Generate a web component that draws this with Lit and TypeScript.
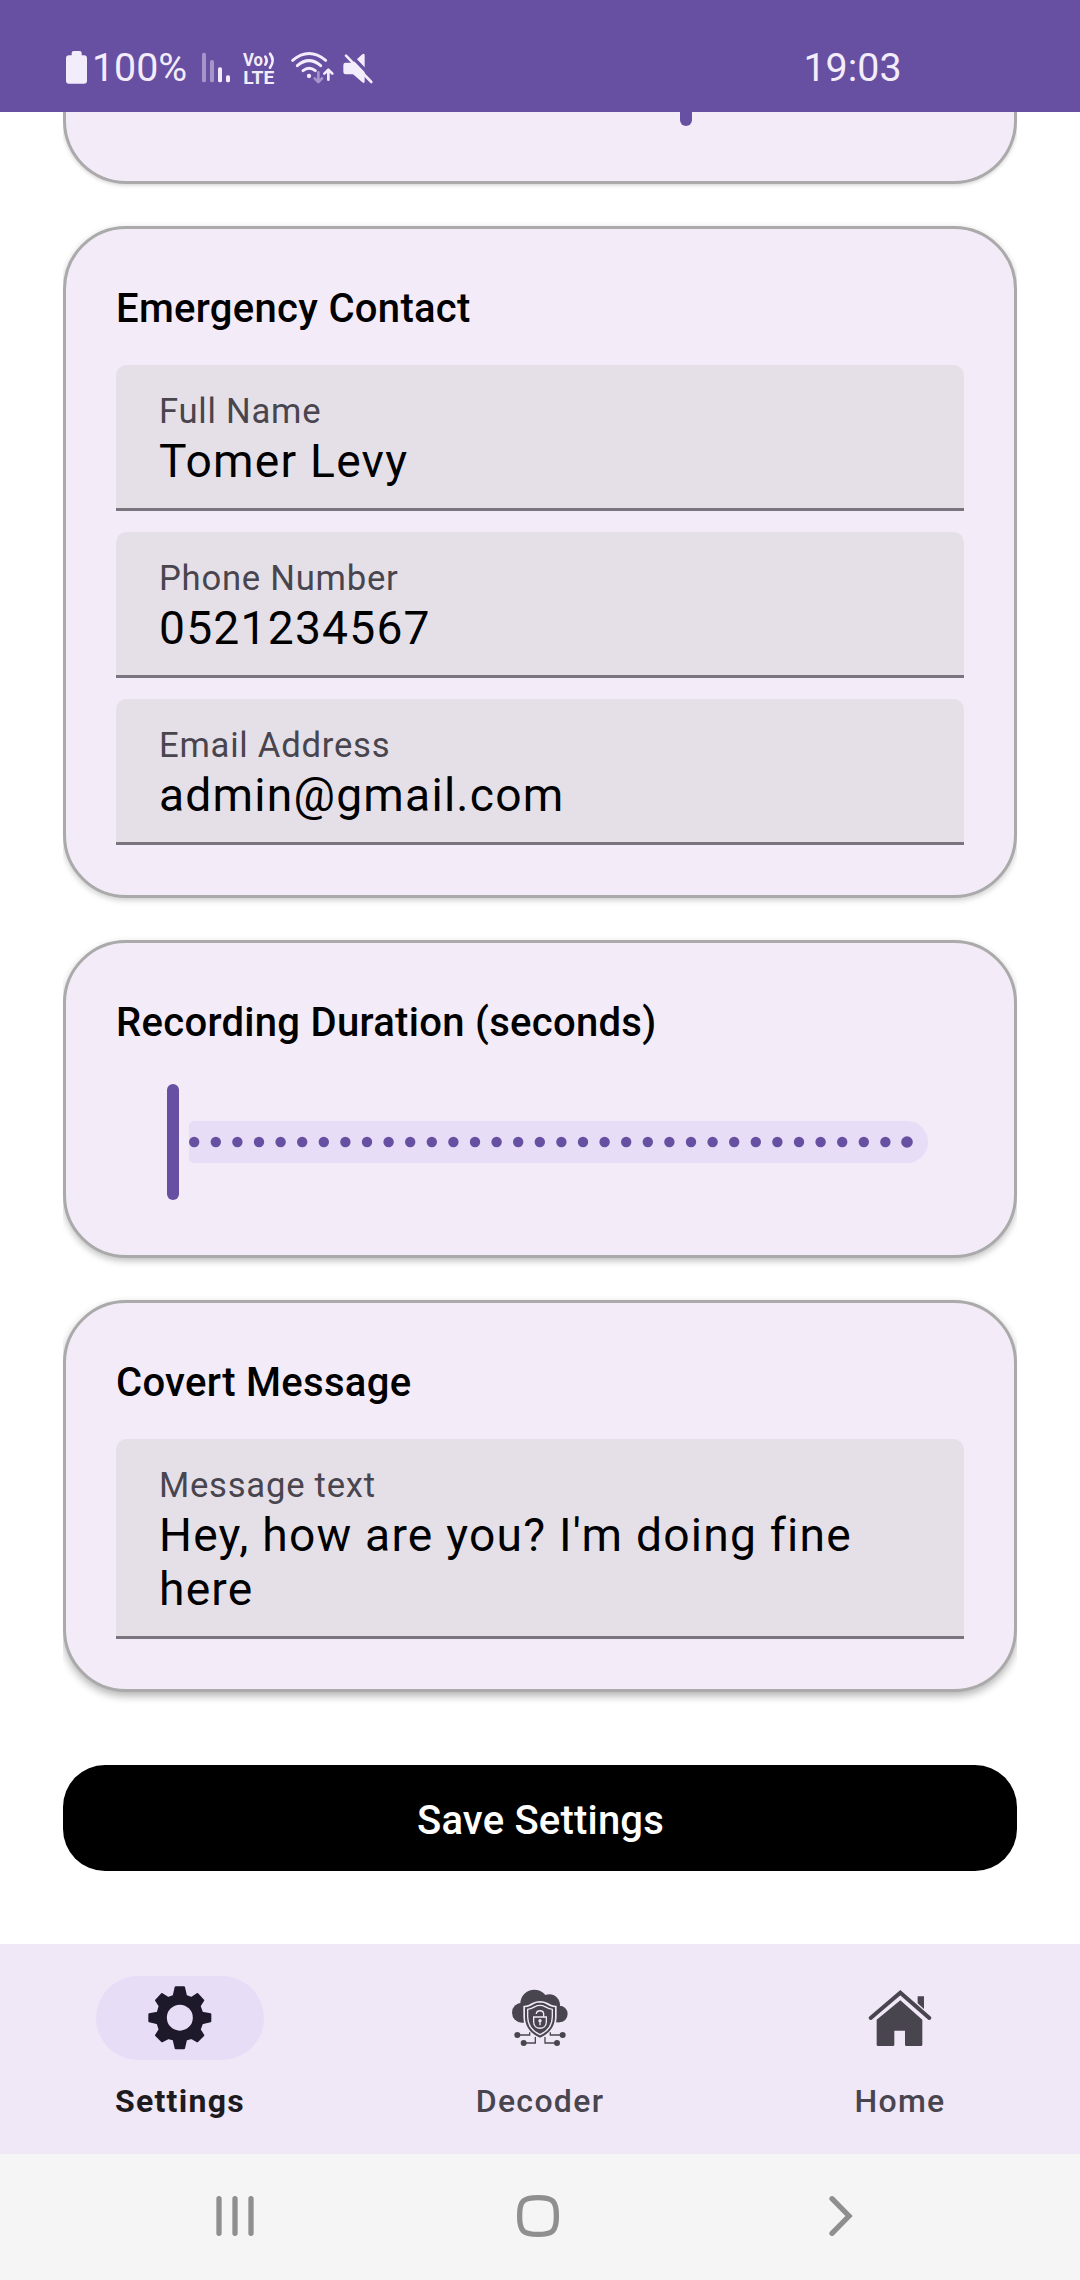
import { LitElement, html, svg, css, type TemplateResult } from "lit";
import { customElement, property } from "lit/decorators.js";

/* ---------- status bar ---------- */

@customElement("status-bar")
export class StatusBar extends LitElement {
  static styles = css`
    :host {
      display: flex;
      align-items: center;
      box-sizing: border-box;
      height: 112px;
      padding: 23px 0 0 66px;
      background: #674fa2;
      color: #f3ecfb;
      font-size: 39.375px;
      line-height: 46px;
    }
    svg {
      display: block;
      flex: none;
      height: 35px;
      fill: #f3ecfb;
      overflow: visible;
    }
    .battery { width: 21px; margin-right: 5px; }
    .level { width: 110px; }
    .signal { width: 28px; margin-right: 13.3px; }
    .volte { width: 32px; margin-right: 16.4px; font: 700 55px Roboto, sans-serif; }
    .wifi { width: 41.7px; margin-right: 9.3px; }
    .mute { width: 30px; }
    .dim { opacity: 0.45; }
    .line { fill: none; stroke: #f3ecfb; stroke-width: 8; stroke-linecap: round; stroke-linejoin: round; }
    .arcs { stroke-width: 9; }
    .cut { stroke: #674fa2; stroke-width: 10; }
    .time { margin-left: auto; width: 276.5px; }
  `;
  render() {
    return html`
      <svg class="battery" viewBox="78 60 63 105">
        <rect x="95" y="63" width="30" height="24" rx="6" />
        <rect x="78" y="76" width="63" height="85" rx="9" />
      </svg>
      <span class="level">100%</span>
      <svg class="signal" viewBox="486 60 84 105">
        <rect class="dim" x="486" y="68" width="12" height="89" rx="5" />
        <rect class="dim" x="510" y="90" width="12" height="67" rx="5" />
        <rect x="534" y="112" width="12" height="45" rx="5" />
        <rect x="558" y="136" width="12" height="21" rx="5" />
      </svg>
      <svg class="volte" viewBox="610 60 96 105">
        <text x="610" y="109" textLength="60" lengthAdjust="spacingAndGlyphs">Vo</text>
        <text x="611" y="161" textLength="93" lengthAdjust="spacingAndGlyphs">LTE</text>
        <path class="line" d="M677 80q8 11 0 24M691 71q16 20 0 42" />
      </svg>
      <svg class="wifi" viewBox="755 60 125 105">
        <path class="line arcs" d="M757 91Q806 50 856 91M771 107Q806 77 841 107M788 122Q806 108 825 122" />
        <circle cx="806" cy="138" r="6.5" />
        <path class="line dim" d="M834 127V155M823 145L834 156L845 145" />
        <path class="line" d="M864 149V121M852 131L864 119L876 131" />
      </svg>
      <svg class="mute" viewBox="908 60 90 105">
        <path d="M916 98H938L966 73Q973 68 973 76V153Q973 162 966 157L938 133H916Q909 133 909 126V105Q909 98 916 98Z" />
        <path class="line cut" d="M922 66L1001 148" />
        <path class="line" d="M917 77L993 156" />
      </svg>
      <span class="time">19:03</span>
    `;
  }
}

/* ---------- cards ---------- */

@customElement("settings-card")
export class SettingsCard extends LitElement {
  @property() heading = "";
  static styles = css`
    :host {
      display: block;
      box-sizing: border-box;
      padding: 50px;
      border: 3px solid #aaaaaa;
      border-radius: 63px;
      background: #f3ebf8;
      clip-path: inset(-24px 0);
    }
    .heading {
      margin: 0 0 27px;
      font-size: 40px;
      font-weight: 500;
      line-height: 59px;
      letter-spacing: 0.3px;
      color: #000;
    }
  `;
  render() {
    return html`<h2 class="heading">${this.heading}</h2><slot></slot>`;
  }
}

@customElement("filled-field")
export class FilledField extends LitElement {
  @property() label = "";
  @property() value = "";
  static styles = css`
    :host {
      display: block;
      padding: 26px 42px 20px 43px;
      border-bottom: 3px solid #7a747f;
      background: #e5e0e8;
      border-radius: 10.5px 10.5px 0 0;
    }
    .label {
      font-size: 34.65px;
      line-height: 41px;
      letter-spacing: 0.75px;
      color: #49454f;
    }
    .value {
      margin-top: 2px;
      font-size: 46.2px;
      line-height: 54px;
      letter-spacing: 1.22px;
      color: #000;
    }
  `;
  render() {
    return html`
      <div class="label">${this.label}</div>
      <div class="value">${this.value}</div>
    `;
  }
}

@customElement("duration-slider")
export class DurationSlider extends LitElement {
  @property({ type: Number }) steps = 34;
  static styles = css`
    :host {
      display: flex;
      align-items: center;
      gap: 10.5px;
      height: 126px;
      padding: 0 36px 0 51.3px;
    }
    .thumb {
      flex: none;
      width: 11.5px;
      height: 116px;
      border-radius: 6px;
      background: #674fa2;
    }
    .track {
      flex: 1;
      height: 42px;
      border-radius: 5px 21px 21px 5px;
      background: #e7ddf7;
    }
    .ticks {
      display: block;
      width: 100%;
      height: 42px;
      fill: #674fa2;
    }
  `;
  render() {
    const last = this.steps - 1;
    return html`
      <div class="thumb"></div>
      <div class="track">
        <svg class="ticks">
          ${Array.from({ length: this.steps }, (_, i) =>
            svg`<circle cx=${5.2 + i * 21.6} cy="21" r=${i === last ? 5.8 : 5.2} />`
          )}
        </svg>
      </div>
    `;
  }
}

/* ---------- bottom navigation ---------- */

const gear = svg`
  <path fill="#1d192b" stroke="#1d192b" stroke-width="6" stroke-linejoin="round"
    d="M286 111H311L317 137L333 143L351 131L369 150L358 167L365 187L390 192V213L365 219L358 238L369 255L351 273L333 263L317 268L311 294H286L280 268L264 263L245 273L227 255L238 238L232 219L207 213V192L232 187L238 167L227 150L245 131L264 143L280 137Z" />
  <circle cx="298.500" cy="202" r="39" fill="#e7ddf7" />`;

const cloud = svg`
  <g fill="#49454f">
    <circle cx="215" cy="187" r="30" />
    <circle cx="252" cy="160" r="42" />
    <circle cx="297" cy="164" r="32" />
    <circle cx="327" cy="191" r="25" />
    <rect x="215" y="170" width="112" height="46" />
    <path stroke="#f0e8f7" stroke-width="10" paint-order="stroke"
      d="M269 157C258 157 256 158 251 161C242 167 234 170 224 171V199C224 229 242 250 269 262C296 250 314 229 314 199V171C304 170 296 167 287 161C282 158 280 157 269 157Z" />
    <circle cx="201" cy="254" r="9" />
    <circle cx="337" cy="254" r="9" />
    <circle cx="220" cy="278" r="9" />
    <circle cx="320" cy="278" r="9" />
  </g>
  <g fill="none" stroke="#49454f" stroke-width="4">
    <path d="M208 254H238V246M330 254H300V246M227 278H255V260M313 278H284V260" />
  </g>
  <g fill="none" stroke="#f0e8f7" stroke-width="4">
    <path d="M269 165C260 165 258 166 254 169C246 174 240 176 232 177V199C232 224 247 243 269 253C291 243 306 224 306 199V177C298 176 292 174 284 169C280 166 278 165 269 165Z" />
    <path d="M250 200H288V215C288 240 250 240 250 215ZM258 191C258 178 280 178 280 191V200" />
    <path d="M269 210V225" />
  </g>
  <circle cx="269" cy="211" r="5" fill="#f0e8f7" />`;

const house = svg`
  <g fill="#49454f">
    <path d="M352 138H371V176L352 159Z" />
    <path d="M300 150L366 208V283Q366 287 362 287H318Q314 287 314 283V241H282V283Q282 287 278 287H233Q229 287 229 283V208Z" />
  </g>
  <path fill="none" stroke="#49454f" stroke-width="12" stroke-linecap="round" d="M211 203L300 127L387 203" />`;

@customElement("bottom-nav")
export class BottomNav extends LitElement {
  static styles = css`
    :host {
      display: grid;
      grid-template-columns: repeat(3, 360px);
      box-sizing: border-box;
      height: 210px;
      padding-top: 32px;
      background: #f0e8f7;
    }
    .item {
      display: flex;
      flex-direction: column;
      align-items: center;
      gap: 22px;
      font-size: 32px;
      font-weight: 500;
      line-height: 38px;
      letter-spacing: 1.31px;
      color: #49454f;
    }
    .pill {
      display: flex;
      align-items: center;
      justify-content: center;
      width: 168px;
      height: 84px;
      border-radius: 42px;
    }
    .pill svg { display: block; width: 66.67px; height: 66.67px; }
    .active { color: #1d1b20; font-weight: 700; }
    .active .pill { background: #e7ddf7; }
  `;
  private item(label: string, icon: TemplateResult<2>, viewBox: string, active = false) {
    return html`
      <div class="item ${active ? "active" : ""}">
        <div class="pill"><svg viewBox=${viewBox}>${icon}</svg></div>
        <span>${label}</span>
      </div>
    `;
  }
  render() {
    return html`
      ${this.item("Settings", gear, "200 104 200 200", true)}
      ${this.item("Decoder", cloud, "170 104 200 200")}
      ${this.item("Home", house, "200 104 200 200")}
    `;
  }
}

@customElement("system-nav")
export class SystemNav extends LitElement {
  static styles = css`
    :host {
      display: flex;
      align-items: center;
      justify-content: space-between;
      box-sizing: border-box;
      height: 126px;
      padding: 0 225px 2px 214px;
      background: #f5f5f5;
    }
    svg {
      display: block;
      height: 44px;
      fill: none;
      stroke: #8f8f8f;
      stroke-width: 5.3;
      stroke-linecap: round;
    }
    .home { margin: 0 4px 0 -4px; }
  `;
  render() {
    return html`
      <svg width="42" viewBox="0 0 42 44"><path d="M5 4.700V39.300M21 4.700V39.300M37 4.700V39.300" /></svg>
      <svg class="home" width="44" viewBox="0 0 44 44">
        <path d="M22 3.600C37 3.600 40.400 7 40.400 22S37 40.400 22 40.400S3.600 37 3.600 22S7 3.600 22 3.600Z" />
      </svg>
      <svg width="28" viewBox="0 0 28 44"><path d="M5 4.700L22 22L5 39.300" /></svg>
    `;
  }
}

/* ---------- page ---------- */

@customElement("app-root")
export class AppRoot extends LitElement {
  static styles = css`
    :host {
      display: flex;
      flex-direction: column;
      width: 1080px;
      height: 2280px;
      overflow: hidden;
      background: #fff;
      font-family: Roboto, sans-serif;
    }
    .content {
      flex: 1;
      display: flex;
      flex-direction: column;
      gap: 42px;
      padding: 0 63px;
      overflow: hidden;
    }
    .previous {
      flex: none;
      box-sizing: border-box;
      height: 72px;
      padding-left: 614.3px;
      border: 3px solid #aaaaaa;
      border-top: 0;
      border-radius: 0 0 63px 63px;
      background: #f3ebf8;
      box-shadow: 0 1px 4px rgba(0, 0, 0, 0.2);
      clip-path: inset(0 0 -24px);
    }
    .previous-thumb {
      width: 11.5px;
      height: 14px;
      border-radius: 0 0 6px 6px;
      background: #674fa2;
    }
    .contact { box-shadow: 0 2px 6px rgba(0, 0, 0, 0.22); }
    .duration { box-shadow: 0 3px 7px rgba(0, 0, 0, 0.25); }
    .message { box-shadow: 0 4px 9px rgba(0, 0, 0, 0.3); }
    .fields {
      display: flex;
      flex-direction: column;
      gap: 21px;
    }
    .save {
      flex: none;
      display: block;
      box-sizing: border-box;
      width: 100%;
      height: 106px;
      margin: 31px 0 0;
      padding: 5px 0 0 1px;
      border: 0;
      border-radius: 42px;
      background: #000;
      color: #fff;
      font: 500 40px Roboto, sans-serif;
      letter-spacing: 0.2px;
    }
  `;
  render() {
    return html`
      <status-bar></status-bar>
      <main class="content">
        <div class="previous"><div class="previous-thumb"></div></div>
        <settings-card class="contact" heading="Emergency Contact">
          <div class="fields">
            <filled-field label="Full Name" value="Tomer Levy"></filled-field>
            <filled-field label="Phone Number" value="0521234567"></filled-field>
            <filled-field label="Email Address" value="admin@gmail.com"></filled-field>
          </div>
        </settings-card>
        <settings-card class="duration" heading="Recording Duration (seconds)">
          <duration-slider></duration-slider>
        </settings-card>
        <settings-card class="message" heading="Covert Message">
          <filled-field label="Message text" value="Hey, how are you? I'm doing fine here"></filled-field>
        </settings-card>
        <button class="save">Save Settings</button>
      </main>
      <bottom-nav></bottom-nav>
      <system-nav></system-nav>
    `;
  }
}
